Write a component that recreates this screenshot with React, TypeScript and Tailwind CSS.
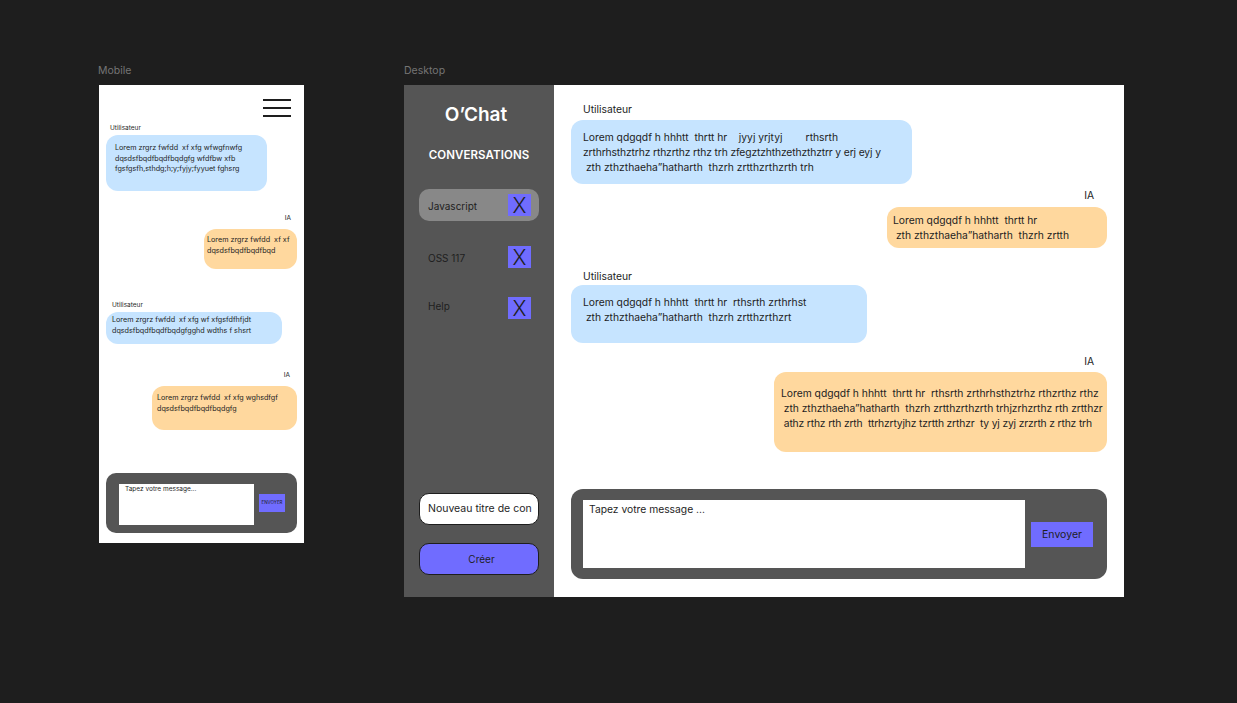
const FONT = "font-['Inter','Liberation_Sans',sans-serif]";

const Burger = () => (
  <div className="flex flex-col items-end pt-[14px] pr-[13px]">
    <div className="flex w-[28px] flex-col gap-[6px]">
      <div className="h-[2px] bg-[#1e1e1e]" />
      <div className="h-[2px] bg-[#1e1e1e]" />
      <div className="h-[2px] bg-[#1e1e1e]" />
    </div>
  </div>
);

const ConvRow = ({
  name,
  active,
  className,
  xOffset = "",
}: {
  name: string;
  active?: boolean;
  className: string;
  xOffset?: string;
}) => (
  <div
    className={`flex h-[32px] items-center justify-between rounded-[10px] pl-[9px] pr-[8px] ${
      active ? "bg-[#888888]" : ""
    } ${className}`}
  >
    <span className="pt-[2px] text-[10px] text-[#1e1e1e]">{name}</span>
    <button
      className={`flex h-[22px] w-[23px] items-center justify-center bg-[#706cff] text-[21px] font-light leading-none text-[#1e1e1e] ${xOffset}`}
    >
      X
    </button>
  </div>
);

const Mobile = () => (
  <div className="h-[458px] w-[205px] shrink-0 bg-white">
    <Burger />
    <p className="ml-[11px] mt-[6px] h-[10px] text-[6.5px] leading-[10px] text-[#1e1e1e]">Utilisateur</p>
    <div className="ml-[7px] mt-[2px] h-[56px] w-[161px] whitespace-pre rounded-[12px] bg-[#c6e4ff] pl-[9px] pt-[8px] text-[7.2px] leading-[10.5px] text-[#1e1e1e]">
      {"Lorem zrgrz fwfdd  xf xfg wfwgfnwfg\ndqsdsfbqdfbqdfbqdgfg wfdfbw xfb\nfgsfgsfh,sthdg;h;y;fyjy;fyyuet fghsrg"}
    </div>
    <p className="mr-[13px] mt-[22px] h-[10px] text-right text-[6.5px] leading-[10px] text-[#1e1e1e]">IA</p>
    <div className="ml-[105px] mt-[6px] h-[40px] w-[93px] whitespace-pre rounded-[12px] bg-[#ffd89e] pl-[3px] pt-[6px] text-[7.2px] leading-[10.5px] text-[#1e1e1e]">
      {"Lorem zrgrz fwfdd  xf xf\ndqsdsfbqdfbqdfbqd"}
    </div>
    <p className="ml-[13px] mt-[31px] h-[10px] text-[6.5px] leading-[10px] text-[#1e1e1e]">Utilisateur</p>
    <div className="ml-[7px] mt-[2px] h-[32px] w-[176px] whitespace-pre rounded-[12px] bg-[#c6e4ff] pl-[6px] pt-[3px] text-[7.2px] leading-[10.5px] text-[#1e1e1e]">
      {"Lorem zrgrz fwfdd  xf xfg wf xfgsfdfhfjdt\ndqsdsfbqdfbqdfbqdgfgghd wdths f shsrt"}
    </div>
    <p className="mr-[14px] mt-[26px] h-[10px] text-right text-[6.5px] leading-[10px] text-[#1e1e1e]">IA</p>
    <div className="ml-[53px] mt-[6px] h-[44px] w-[145px] whitespace-pre rounded-[12px] bg-[#ffd89e] pl-[5px] pt-[7px] text-[7.2px] leading-[10.5px] text-[#1e1e1e]">
      {"Lorem zrgrz fwfdd  xf xfg wghsdfgf\ndqsdsfbqdfbqdfbqdgfg"}
    </div>
    <div className="ml-[7px] mt-[43px] flex h-[60px] w-[191px] items-center rounded-[10px] bg-[#555555] pl-[13px]">
      <div className="mt-[2px] h-[41px] w-[135px] bg-white pl-[6px] pt-[1px] text-[6.5px] leading-[8px] text-[#1e1e1e]">
        Tapez votre message...
      </div>
      <button className="ml-[5px] flex h-[18px] w-[26px] items-center justify-center bg-[#706cff] text-[4.5px] text-[#1e1e1e]">
        ENVOYER
      </button>
    </div>
  </div>
);

const Sidebar = () => (
  <aside className="flex w-[150px] shrink-0 flex-col bg-[#555555] px-[15px]">
    <h1 className="mt-[17px] pr-[6px] text-center text-[19px] font-semibold leading-[26px] text-white">O’Chat</h1>
    <h2 className="mt-[19px] text-center text-[11.5px] font-semibold leading-[16px] tracking-[0.1px] text-white">
      CONVERSATIONS
    </h2>
    <ConvRow name="Javascript" active className="mt-[26px]" />
    <ConvRow name="OSS 117" className="mt-[20px]" />
    <ConvRow name="Help" className="mt-[16px]" xOffset="mt-[6px]" />
    <div className="mt-[172px] flex h-[32px] items-center whitespace-nowrap rounded-[10px] border border-[#1e1e1e] bg-white pl-[8px] text-[10.5px] text-[#1e1e1e]">
      Nouveau titre de con
    </div>
    <button className="mt-[18px] h-[32px] rounded-[10px] border border-[#1e1e1e] bg-[#706cff] pl-[5px] text-[10px] text-[#1e1e1e]">
      Créer
    </button>
  </aside>
);

const Desktop = () => (
  <div className="flex h-[512px] w-[720px] shrink-0">
    <Sidebar />
    <main className="flex-1 bg-white pl-[17px] pr-[17px] text-[10.3px] leading-[15px] text-[#1e1e1e]">
      <p className="ml-[12px] mt-[17px] h-[15px]">Utilisateur</p>
      <div className="mt-[3px] h-[64px] w-[341px] whitespace-pre rounded-[12px] bg-[#c6e4ff] pl-[12px] pt-[10px]">
        {"Lorem qdgqdf h hhhtt  thrtt hr    jyyj yrjtyj        rthsrth\n"}
        <span className="tracking-[-0.13px]">zrthrhsthztrhz rthzrthz rthz trh zfegztzhthzethzthztrr y erj eyj y</span>
        {"\n zth zthzthaeha”hatharth  thzrh zrtthzrthzrth trh"}
      </div>
      <p className="mr-[13px] mt-[4px] h-[15px] text-right">IA</p>
      <div className="ml-[316px] mt-[4px] h-[41px] w-[220px] whitespace-pre rounded-[12px] bg-[#ffd89e] pl-[6px] pt-[6px]">
        {"Lorem qdgqdf h hhhtt  thrtt hr\n zth zthzthaeha”hatharth  thzrh zrtth"}
      </div>
      <p className="ml-[12px] mt-[21px] h-[15px]">Utilisateur</p>
      <div className="mt-[1px] h-[58px] w-[296px] whitespace-pre rounded-[12px] bg-[#c6e4ff] pl-[12px] pt-[10px]">
        {"Lorem qdgqdf h hhhtt  thrtt hr  rthsrth zrthrhst\n zth zthzthaeha”hatharth  thzrh zrtthzrthzrt"}
      </div>
      <p className="mr-[13px] mt-[11px] h-[15px] text-right">IA</p>
      <div className="ml-[203px] mt-[3px] h-[80px] w-[333px] whitespace-pre rounded-[12px] bg-[#ffd89e] pl-[7px] pt-[14px]">
        {"Lorem qdgqdf h hhhtt  thrtt hr  rthsrth zrthrhsthztrhz rthzrthz rthz\n"}
        <span className="tracking-[-0.05px]"> zth zthzthaeha”hatharth  thzrh zrtthzrthzrth trhjzrhzrthz rth zrtthzr</span>
        {"\n"}
        <span className="tracking-[-0.15px]"> athz rthz rth zrth  ttrhzrtyjhz tzrtth zrthzr  ty yj zyj zrzrth z rthz trh</span>
      </div>
      <div className="mt-[37px] flex h-[90px] w-[536px] items-center rounded-[12px] bg-[#555555] pl-[12px]">
        <div className="h-[68px] w-[442px] bg-white pl-[6px] pt-[2px]">Tapez votre message ...</div>
        <button className="ml-[6px] h-[25px] w-[62px] bg-[#706cff] text-[10.5px] text-[#1e1e1e]">Envoyer</button>
      </div>
    </main>
  </div>
);

export default function App() {
  return (
    <div className={`flex h-[703px] w-full items-start gap-[100px] overflow-hidden bg-[#1e1e1e] pl-[99px] pt-[63px] ${FONT}`}>
      <div>
        <p className="-ml-[1px] mb-[7px] h-[15px] text-[10.5px] leading-[15px] text-[#757575]">Mobile</p>
        <Mobile />
      </div>
      <div>
        <p className="mb-[7px] h-[15px] text-[10.5px] leading-[15px] text-[#757575]">Desktop</p>
        <Desktop />
      </div>
    </div>
  );
}
